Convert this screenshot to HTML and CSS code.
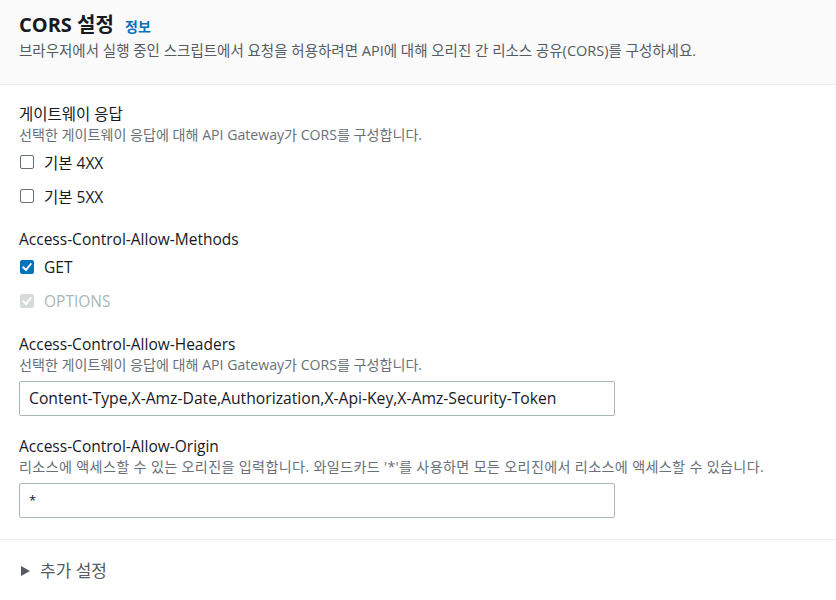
FILE: index.html
```html
<!DOCTYPE html>
<html lang="ko">
<head>
<meta charset="utf-8">
<link rel="stylesheet" href="styles.css">
</head>
<body>
<div class="panel">
  <header class="head">
    <h2 class="title">CORS 설정 <a class="info">정보</a></h2>
    <p class="head-desc">브라우저에서 실행 중인 스크립트에서 요청을 허용하려면 API에 대해 오리진 간 리소스 공유(CORS)를 구성하세요.</p>
  </header>
  <div class="body">
    <div class="field">
      <div class="label">게이트웨이 응답</div>
      <div class="desc">선택한 게이트웨이 응답에 대해 API Gateway가 CORS를 구성합니다.</div>
      <label class="check"><span class="box"></span><span>기본 4XX</span></label>
      <label class="check"><span class="box"></span><span>기본 5XX</span></label>
    </div>
    <div class="field">
      <div class="label">Access-Control-Allow-Methods</div>
      <label class="check"><span class="box on"><svg viewBox="0 0 14 14" width="14" height="14"><path d="M3.2 7.2 L6 10 L10.8 4" fill="none" stroke="#fff" stroke-width="2" stroke-linecap="round" stroke-linejoin="round"/></svg></span><span>GET</span></label>
      <label class="check disabled"><span class="box dis"><svg viewBox="0 0 14 14" width="14" height="14"><path d="M3.2 7.2 L6 10 L10.8 4" fill="none" stroke="#fff" stroke-width="2" stroke-linecap="round" stroke-linejoin="round"/></svg></span><span>OPTIONS</span></label>
    </div>
    <div class="field">
      <div class="label">Access-Control-Allow-Headers</div>
      <div class="desc">선택한 게이트웨이 응답에 대해 API Gateway가 CORS를 구성합니다.</div>
      <div class="input">Content-Type,X-Amz-Date,Authorization,X-Api-Key,X-Amz-Security-Token</div>
    </div>
    <div class="field">
      <div class="label">Access-Control-Allow-Origin</div>
      <div class="desc wide">리소스에 액세스할 수 있는 오리진을 입력합니다. 와일드카드 '*'를 사용하면 모든 오리진에서 리소스에 액세스할 수 있습니다.</div>
      <div class="input star">*</div>
    </div>
  </div>
  <div class="more">
    <span class="tri"></span><span>추가 설정</span>
  </div>
</div>
</body>
</html>
```
FILE: styles.css
```css
* { box-sizing: border-box; }
body {
  margin: 0;
  font-family: "Open Sans", "Noto Sans CJK KR", sans-serif;
  color: #16191f;
  background: #fff;
}
.head {
  background: #fafafa;
  border-bottom: 1px solid #eaeded;
  padding: 11px 19px 0;
  height: 85px;
}
.title {
  margin: 0;
  font-size: 20px;
  font-weight: 700;
  line-height: 28px;
  color: #16191f;
}
.info {
  font-size: 14px;
  font-weight: 700;
  color: #0073bb;
  margin-left: 6px;
}
.head-desc {
  margin: 0;
  font-size: 14.5px;
  line-height: 20px;
  color: #545b64;
}
.body {
  padding: 18px 19px 21px;
  border-bottom: 1px solid #eaeded;
}
.field { margin-bottom: 19px; }
.field:last-child { margin-bottom: 0; }
.label {
  font-size: 15.5px;
  line-height: 22px;
  color: #16191f;
}
.desc {
  font-size: 14.1px;
  line-height: 20px;
  color: #687078;
}
.desc.wide { letter-spacing: 0.35px; }
.check {
  display: flex;
  align-items: center;
  gap: 10px;
  font-size: 15.5px;
  height: 34px;
  color: #16191f;
}
.check:last-child { margin-bottom: -4px; }
.check.disabled { color: #aab7b8; }
.box {
  flex: none;
  width: 14px;
  height: 14px;
  border: 1px solid #687078;
  border-radius: 2px;
  margin-left: 1px;
  display: flex;
}
.box.on { background: #0073bb; border-color: #0073bb; }
.box.dis { background: #d5dbdb; border-color: #d5dbdb; }
.box svg { margin: -1px; flex: none; }
.input {
  width: 596px;
  height: 35px;
  border: 1px solid #aab7b8;
  border-radius: 2px;
  padding: 0 9px;
  font-size: 15.7px;
  line-height: 33px;
  color: #16191f;
  margin-top: 6px;
}
.input.star { font-size: 13px; }
.more {
  display: flex;
  align-items: center;
  gap: 10px;
  padding: 20px 20px;
  font-size: 17px;
  line-height: 22px;
  color: #545b64;
}
.tri {
  width: 0; height: 0;
  border-top: 5px solid transparent;
  border-bottom: 5px solid transparent;
  border-left: 9px solid #545b64;
  margin-left: 1px;
}
```
